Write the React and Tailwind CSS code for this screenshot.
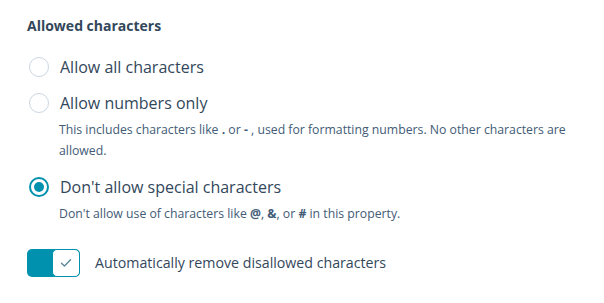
import React, { useState } from "react";

function Radio({ checked }) {
  return (
    <span
      className={
        "w-[20px] h-[20px] rounded-full flex items-center justify-center shrink-0 bg-white " +
        (checked ? "border-2 border-[#0091ae]" : "border-[1.5px] border-[#cbd6e2]")
      }
    >
      {checked && <span className="w-[10px] h-[10px] rounded-full bg-[#0091ae]" />}
    </span>
  );
}

function Option({ label, checked, onSelect, children }) {
  return (
    <div>
      <label className="flex items-center gap-[11px] cursor-pointer" onClick={onSelect}>
        <span className="pl-[2px]">
          <Radio checked={checked} />
        </span>
        <span className="text-[16px] leading-[24px] text-[#33475b]">{label}</span>
      </label>
      {children && (
        <p className="pl-[32px] mt-[3.5px] max-w-[560px] text-[12.25px] leading-[21px] text-[#425b76]">
          {children}
        </p>
      )}
    </div>
  );
}

const B = ({ children }) => <b className="inline-block font-bold">{children}</b>;

export default function App() {
  const [choice, setChoice] = useState("special");
  const [autoRemove, setAutoRemove] = useState(true);

  return (
    <div
      className="bg-white min-h-screen pt-[16px] pl-[27px]"
      style={{ fontFamily: '"Open Sans", "Noto Sans", sans-serif' }}
    >
      <h3 className="text-[14px] leading-[20px] font-bold text-[#33475b]">Allowed characters</h3>

      <div className="mt-[19px] flex flex-col">
        <Option label="Allow all characters" checked={choice === "all"} onSelect={() => setChoice("all")} />
        <div className="mt-[12px]">
          <Option label="Allow numbers only" checked={choice === "numbers"} onSelect={() => setChoice("numbers")}>
            This includes characters like <B>.</B> or <B>-</B> , used for formatting numbers. No other characters are
            allowed.
          </Option>
        </div>
        <div className="mt-[14.5px]">
          <Option label="Don't allow special characters" checked={choice === "special"} onSelect={() => setChoice("special")}>
            Don't allow use of characters like <B>@</B>, <B>&amp;</B>, or <B>#</B> in this property.
          </Option>
        </div>
      </div>

      <div className="mt-[25.5px] flex items-center gap-[15px]">
        <button
          type="button"
          onClick={() => setAutoRemove(!autoRemove)}
          className={
            "w-[53px] h-[28px] rounded-[5px] flex p-0 " +
            (autoRemove ? "bg-[#0091ae] justify-end" : "bg-[#eaf0f6] justify-start")
          }
        >
          <span className="w-[28px] h-[28px] rounded-[5px] bg-white border border-[#0091ae] flex items-center justify-center">
            {autoRemove && (
              <svg width="12" height="10" viewBox="0 0 12 10" fill="none">
                <path d="M1.5 5.2 L4.5 8 L10.5 1.8" stroke="#5b8a99" strokeWidth="1.4" strokeLinecap="round" strokeLinejoin="round" />
              </svg>
            )}
          </span>
        </button>
        <span className="text-[14.2px] leading-[20px] text-[#33475b]">Automatically remove disallowed characters</span>
      </div>
    </div>
  );
}
